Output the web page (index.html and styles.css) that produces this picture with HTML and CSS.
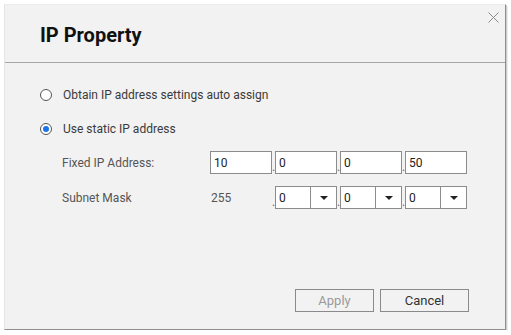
FILE: index.html
```html
<!DOCTYPE html>
<html>
<head>
<meta charset="utf-8">
<link rel="stylesheet" href="styles.css">
</head>
<body>
<div class="dialog">
  <div class="header">
    <h1 class="title">IP Property</h1>
    <span class="close"><svg width="11" height="11" viewBox="0 0 11 11"><path d="M0.5 0.5L10.5 10.5M10.5 0.5L0.5 10.5" stroke="#8a8a8a" stroke-width="1"/></svg></span>
  </div>
  <div class="body">
    <label class="radio-row"><span class="radio"></span><span class="rlabel">Obtain IP address settings auto assign</span></label>
    <label class="radio-row second"><span class="radio checked"></span><span class="rlabel">Use static IP address</span></label>
    <div class="field-row first">
      <span class="flabel">Fixed IP Address:</span>
      <div class="octets">
        <span class="box">10</span>
        <span class="dot">.</span><span class="box">0</span>
        <span class="dot">.</span><span class="box">0</span>
        <span class="dot">.</span><span class="box">50</span>
      </div>
    </div>
    <div class="field-row">
      <span class="flabel">Subnet Mask</span>
      <div class="octets">
        <span class="fixed">255</span>
        <span class="dot">.</span><span class="select"><span class="sval">0</span><span class="sarrow"></span></span>
        <span class="dot">.</span><span class="select"><span class="sval">0</span><span class="sarrow"></span></span>
        <span class="dot">.</span><span class="select"><span class="sval">0</span><span class="sarrow"></span></span>
      </div>
    </div>
  </div>
  <div class="footer">
    <button class="btn apply">Apply</button>
    <button class="btn cancel">Cancel</button>
  </div>
</div>
</body>
</html>
```
FILE: styles.css
```css
html, body { margin: 0; padding: 0; background: #ffffff; }
body { font-family: Roboto, "Liberation Sans", sans-serif; color: #333; }
.dialog {
  position: relative;
  margin: 4px 0 0 4px;
  width: 500px;
  height: 324px;
  background: #f2f2f2;
  border-left: 1px solid #e6e6e6;
  border-top: 1px solid #ececec;
  border-right: 1px solid #8f8f8f;
  border-bottom: 1px solid #8f8f8f;
  box-shadow: 1px 1px 0 #cfcfcf, 2px 2px 0 #ececec;
  display: flex;
  flex-direction: column;
}
.header {
  height: 57px;
  border-bottom: 1px solid #a6a6a6;
  display: flex;
  align-items: center;
  padding-left: 35px;
}
.title {
  margin: 0;
  font-size: 20px;
  font-weight: 700;
  color: #111;
  padding-top: 2px;
}
.close {
  position: absolute;
  right: 6px;
  top: 7px;
  width: 11px;
  height: 11px;
  display: block;
}
.close svg { display: block; }
.body {
  flex: 1;
  padding: 26px 0 0 35px;
  font-size: 12px;
}
.radio-row {
  display: flex;
  align-items: center;
  height: 12px;
}
.radio-row.second { margin-top: 22px; }
.radio {
  width: 10px;
  height: 10px;
  border: 1px solid #555;
  border-radius: 50%;
  background: #fff;
  box-sizing: content-box;
  position: relative;
  margin-right: 11px;
}
.radio.checked::after {
  content: "";
  position: absolute;
  left: 2px; top: 2px;
  width: 6px; height: 6px;
  border-radius: 50%;
  background: #1a73e8;
}
.rlabel { color: #3a3a3a; }
.field-row {
  display: flex;
  align-items: center;
  height: 23px;
  margin-top: 12px;
  padding-left: 22px;
}
.field-row.first { margin-top: 16px; }
.flabel { width: 148px; color: #555; }
.octets { display: flex; align-items: center; }
.box, .select {
  height: 21px;
  border: 1px solid #8c8c8c;
  background: #fff;
  box-sizing: content-box;
  display: flex;
  align-items: center;
  color: #222;
  font-size: 12px;
}
.box { width: 60px; padding-left: 0; }
.box, .sval { text-indent: 3px; }
.dot { width: 3px; text-align: center; color: #666; font-size: 12px; line-height: 1; padding-top: 8px; }
.fixed { width: 62px; color: #555; padding-left: 1px; box-sizing: border-box; }
.select { width: 60px; }
.sval { flex: 1; border-right: 1px solid #8c8c8c; height: 21px; display: flex; align-items: center; }
.sarrow { width: 25px; height: 21px; position: relative; }
.sarrow::after {
  content: "";
  position: absolute;
  left: 9px; top: 9px;
  border-left: 4px solid transparent;
  border-right: 4px solid transparent;
  border-top: 4px solid #222;
}
.footer {
  display: flex;
  justify-content: flex-end;
  gap: 6px;
  padding: 0 36px 17px 0;
}
.btn {
  height: 23px;
  border: 1px solid #8a8a8a;
  background: #f2f2f2;
  font-family: Roboto, "Liberation Sans", sans-serif;
  font-size: 13px;
  padding: 0;
  margin: 0;
}
.apply { width: 79px; color: #9a9a9a; }
.cancel { width: 89px; color: #333; }
```
